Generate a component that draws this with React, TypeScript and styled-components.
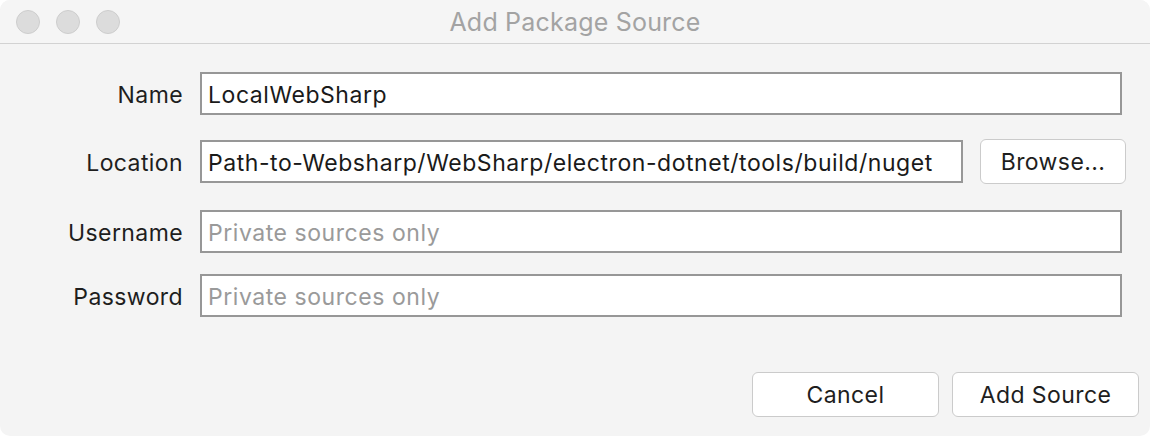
import React from "react";
import styled, { createGlobalStyle } from "styled-components";

const Global = createGlobalStyle`
  html, body { margin: 0; padding: 0; background: #ffffff; }
  body { font-family: Inter, "Liberation Sans", sans-serif; }
  * { box-sizing: border-box; }
`;

const Window = styled.div`
  width: 1150px;
  height: 436px;
  background: #f4f4f4;
  border-radius: 10px;
  overflow: hidden;
  display: flex;
  flex-direction: column;
`;

const TitleBar = styled.div`
  height: 44px;
  flex: none;
  background: #f5f5f5;
  border-bottom: 1px solid #d2d2d2;
  display: flex;
  align-items: center;
  position: relative;
  padding-left: 16px;
`;

const Lights = styled.div`
  display: flex;
  gap: 16px;
`;

const Light = styled.span`
  width: 24px;
  height: 24px;
  border-radius: 50%;
  background: #dcdcdc;
  border: 1px solid #cdcdcd;
`;

const Title = styled.div`
  position: absolute;
  inset: 0;
  display: flex;
  align-items: center;
  justify-content: center;
  font-size: 25px;
  letter-spacing: 0.2px;
  color: #a3a3a3;
  padding-top: 1px;
  pointer-events: none;
`;

const Body = styled.div`
  flex: 1;
  display: flex;
  flex-direction: column;
  padding-top: 28px;
`;

const Row = styled.div<{ $top?: number }>`
  display: flex;
  align-items: center;
  height: 43px;
  margin-top: ${(p) => p.$top ?? 0}px;
  padding-right: 28px;
`;

const Label = styled.label`
  width: 183px;
  flex: none;
  text-align: right;
  font-size: 23px;
  letter-spacing: 0.4px;
  color: #1e1e1e;
  margin-right: 17px;
  padding-top: 2px;
`;

const Field = styled.input<{ $width?: number }>`
  flex: ${(p) => (p.$width ? "none" : "1")};
  width: ${(p) => (p.$width ? `${p.$width}px` : "auto")};
  height: 43px;
  border: 2px solid #979797;
  background: #ffffff;
  padding: 2px 6px 0;
  font-family: Inter, "Liberation Sans", sans-serif;
  font-size: 23px;
  letter-spacing: 0.55px;
  color: #1a1a1a;
  outline: none;
  &::placeholder {
    color: #9a9a9a;
  }
`;

const Button = styled.button<{ $width: number }>`
  width: ${(p) => p.$width}px;
  height: 45px;
  flex: none;
  background: #ffffff;
  border: 1.5px solid #cbcbcb;
  border-radius: 6px;
  font-family: Inter, "Liberation Sans", sans-serif;
  font-size: 23px;
  letter-spacing: 0.4px;
  color: #1e1e1e;
  padding: 0;
`;

const LocationRow = styled(Row)`
  padding-right: 24px;
  gap: 17px;
`;

const LocationLabel = styled(Label)`
  margin-right: 0;
`;

const Footer = styled.div`
  display: flex;
  justify-content: flex-end;
  gap: 13px;
  padding-right: 11px;
  margin-top: 55px;
`;

export default function App() {
  return (
    <>
      <Global />
      <Window>
        <TitleBar>
          <Lights>
            <Light />
            <Light />
            <Light />
          </Lights>
          <Title>Add Package Source</Title>
        </TitleBar>
        <Body>
          <Row>
            <Label>Name</Label>
            <Field defaultValue="LocalWebSharp" />
          </Row>
          <LocationRow $top={25}>
            <LocationLabel>Location</LocationLabel>
            <Field
              $width={763}
              defaultValue="Path-to-Websharp/WebSharp/electron-dotnet/tools/build/nuget"
            />
            <Button $width={146}>Browse...</Button>
          </LocationRow>
          <Row $top={27}>
            <Label>Username</Label>
            <Field placeholder="Private sources only" />
          </Row>
          <Row $top={21}>
            <Label>Password</Label>
            <Field type="password" placeholder="Private sources only" />
          </Row>
          <Footer>
            <Button $width={187}>Cancel</Button>
            <Button $width={187}>Add Source</Button>
          </Footer>
        </Body>
      </Window>
    </>
  );
}
